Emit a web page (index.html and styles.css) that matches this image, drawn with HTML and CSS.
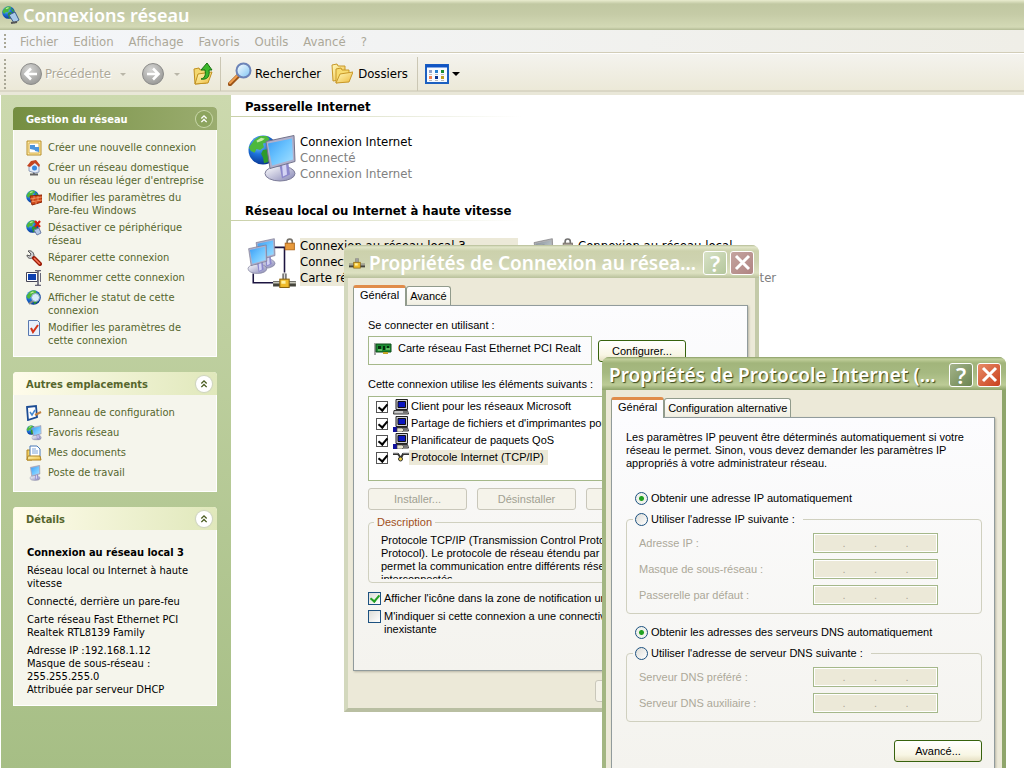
FILE: index.html
```
<!DOCTYPE html>
<html lang="fr">
<head>
    <meta charset="utf-8">
    <title>Connexions réseau</title>
    <link rel="stylesheet" href="styles.css">
</head>
<body>
<svg class="defs" width="0" height="0" aria-hidden="true">
    <defs>
        <radialGradient id="sea" cx="0.35" cy="0.3" r="0.75">
            <stop offset="0" stop-color="#8fd0ff"/>
            <stop offset="0.45" stop-color="#1e74dc"/>
            <stop offset="1" stop-color="#06308c"/>
        </radialGradient>
        <linearGradient id="screen" x1="0" y1="0" x2="1" y2="1">
            <stop offset="0" stop-color="#3a9cf4"/>
            <stop offset="0.5" stop-color="#6cc4ff"/>
            <stop offset="1" stop-color="#a4e0ff"/>
        </linearGradient>
        <linearGradient id="stand" x1="0" y1="0" x2="1" y2="1">
            <stop offset="0" stop-color="#ffffff"/>
            <stop offset="1" stop-color="#8484b4"/>
        </linearGradient>
        <linearGradient id="paper" x1="0" y1="0" x2="1" y2="1">
            <stop offset="0" stop-color="#fffbc0"/>
            <stop offset="1" stop-color="#eeb93a"/>
        </linearGradient>
        <radialGradient id="grey" cx="0.4" cy="0.3" r="0.8">
            <stop offset="0" stop-color="#d6d6d4"/>
            <stop offset="1" stop-color="#939391"/>
        </radialGradient>
        <linearGradient id="lens" x1="0" y1="0" x2="1" y2="1">
            <stop offset="0" stop-color="#ffffff"/>
            <stop offset="1" stop-color="#7cc4f4"/>
        </linearGradient>

        <symbol id="globe" viewBox="0 0 32 32">
            <circle cx="16" cy="16" r="15.5" fill="url(#sea)"/>
            <path d="M7 5l6-4 7 0 3 3-3 4-4 1 1 4-4 3-4-1-2 4-4-2-2-4z" fill="#4cb83c"/>
            <path d="M16 16l6-1 5 4-2 5-4 5-4 1-1-6-2-4z" fill="#2e9a2c"/>
            <path d="M24 6l4 4 2 5-4-1-3-4z" fill="#3aa834"/>
            <path d="M9 6l5-3 4 1-3 2-5 2z" fill="#c4eca4"/>
        </symbol>
        <symbol id="monitor" viewBox="0 0 32 48">
            <ellipse cx="16" cy="39" rx="15" ry="7.5" fill="url(#stand)" stroke="#7c7c98"/>
            <path d="M15 28l9-2 2 14-8 4z" fill="#8c88cc"/>
            <path d="M18 30l4-1 1 11-4 2z" fill="#d4d4f4"/>
            <path d="M2 7L30 1l1 26L6 34z" fill="#b0b0cc" stroke="#74748c"/>
            <path d="M4 9l24-5 1 21L8 31z" fill="url(#screen)"/>
        </symbol>
        <symbol id="lock" viewBox="0 0 10 12">
            <path d="M2.5 6V3.5a2.5 2.5 0 0 1 5 0V6" fill="none" stroke="#77736b" stroke-width="1.6"/>
            <rect x="0.5" y="5" width="9" height="6.5" fill="#e89a3c" stroke="#b06a20"/>
        </symbol>
        <symbol id="plug" viewBox="0 0 22 15">
            <path d="M11 1v7" stroke="#555" stroke-width="4"/>
            <path d="M11 1v7" stroke="#ddd" stroke-width="1.5"/>
            <path d="M0 11h22" stroke="#45453c" stroke-width="5"/>
            <path d="M0 10h22" stroke="#c8c8bc" stroke-width="1.5"/>
            <rect x="6.500" y="6.500" width="9" height="8" fill="#f0bc2c" stroke="#8a6410"/>
            <path d="M8 8h4v3H8z" fill="#fff2a0"/>
        </symbol>
        <symbol id="netmonitor" viewBox="0 0 48 50">
            <use href="#globe" x="0" y="1" width="30" height="30"/>
            <use href="#monitor" x="16" y="0" width="32" height="49"/>
        </symbol>
        <symbol id="lan" viewBox="0 0 48 48">
            <path d="M26 9h10v24M6 34v9h20" fill="none" stroke="#1c1440" stroke-width="1.500"/>
            <use href="#monitor" x="7" y="0" width="21" height="30"/>
            <use href="#monitor" x="0" y="6" width="20" height="29"/>
            <use href="#lock" x="36" y="0" width="10" height="12"/>
            <use href="#plug" x="25" y="33" width="22" height="15"/>
        </symbol>
        <symbol id="chevrons" viewBox="0 0 18 18">
            <path d="M6 8.500l3-3 3 3M6 12.500l3-3 3 3" fill="none" stroke="currentColor" stroke-width="1.500"/>
        </symbol>
        <symbol id="pc" viewBox="0 0 16 16">
            <path d="M3 .5h11.500v10H3z" fill="#cfcfd6" stroke="#222"/>
            <path d="M5 2.500h7.500v6H5z" fill="#0a16c0" stroke="#111"/>
            <path d="M1 11.500h13.500l1 3.500H.5z" fill="#c4c4c4" stroke="#333"/>
            <path d="M10 13h4" stroke="#222"/>
        </symbol>
        <symbol id="service" viewBox="0 0 16 16">
            <use href="#pc" width="16" height="16"/>
            <path d="M0 11h4v5H0z" fill="#10109c"/>
            <path d="M4 12l5 0 2 2-2 2H4z" fill="#e6e2cc" stroke="#333" stroke-width=".6"/>
        </symbol>
    </defs>
</svg>

<header class="titlebar">
    <svg class="icon" viewBox="0 0 18 18"><use href="#globe" width="13" height="13"/><path d="M7 9l6-3 4 8-5 3z" fill="#a8c8e8" stroke="#3c5c88"/><path d="M9 17l6-1" stroke="#555" stroke-width="2"/></svg>
    <h1>Connexions réseau</h1>
</header>

<nav class="menubar">
    <span class="grip"></span>
    <a href="#">Fichier</a>
    <a href="#">Edition</a>
    <a href="#">Affichage</a>
    <a href="#">Favoris</a>
    <a href="#">Outils</a>
    <a href="#">Avancé</a>
    <a href="#">?</a>
</nav>

<div class="toolbar">
    <span class="grip"></span>
    <button type="button" class="tool back" disabled>
        <svg width="24" height="24" viewBox="0 0 24 24"><circle cx="12" cy="12" r="10.500" fill="url(#grey)" stroke="#8c8c8a"/><path d="M18 12H7M12 6.500L6.500 12l5.500 5.500" fill="none" stroke="#fff" stroke-width="2.600"/></svg>
        Précédente
    </button>
    <span class="caret off"></span>
    <button type="button" class="tool next" aria-label="Suivante" disabled>
        <svg width="24" height="24" viewBox="0 0 24 24"><circle cx="12" cy="12" r="10.500" fill="url(#grey)" stroke="#8c8c8a"/><path d="M6 12h11M12 6.500l5.500 5.500-5.500 5.500" fill="none" stroke="#fff" stroke-width="2.600"/></svg>
    </button>
    <span class="caret off"></span>
    <button type="button" class="tool up" aria-label="Dossier parent">
        <svg width="20" height="24" viewBox="0 0 20 24"><path d="M1 7l5-1 1 2 6-1v14l-11 1z" fill="#f4d870" stroke="#c09020"/><path d="M2 22l3-10 14-2-4 11z" fill="url(#paper)" stroke="#c09020"/><path d="M8 17c4-1 5-4 4-9H8l6-7 5 7h-3c1 7-2 10-8 9z" fill="#3cb82c" stroke="#187010"/></svg>
    </button>
    <span class="rule"></span>
    <button type="button" class="tool">
        <svg width="24" height="24" viewBox="0 0 24 24"><path d="M2 22l8-8" stroke="#9c5418" stroke-width="4.500" stroke-linecap="round"/><path d="M2 21l7-7" stroke="#f0a050" stroke-width="2" stroke-linecap="round"/><circle cx="15.500" cy="8.500" r="7" fill="url(#lens)" stroke="#6c84b8" stroke-width="2"/></svg>
        Rechercher
    </button>
    <button type="button" class="tool folders">
        <svg width="22" height="22" viewBox="0 0 22 22"><path d="M1 2l5-1 1 2 7 0v13l-12 2z" fill="url(#paper)" stroke="#c89828"/><path d="M5 20V6l5-1 1 2h7v10z" fill="#f8dc70" stroke="#c89828"/><path d="M5 20l4-9 13-2-4 10z" fill="url(#paper)" stroke="#c89828"/></svg>
        Dossiers
    </button>
    <span class="rule"></span>
    <button type="button" class="tool view" aria-label="Affichages">
        <svg width="24" height="20" viewBox="0 0 24 20"><rect x="1" y="1" width="22" height="18" fill="#f8fbff" stroke="#1c60c0" stroke-width="2"/><path d="M1 2h22" stroke="#1054c4" stroke-width="3"/><path d="M4 6h3v3H4z" fill="#90a0c8"/><path d="M10 6h3v3h-3z" fill="#2880d0"/><path d="M16 6h3v3h-3z" fill="#1c8c30"/><path d="M4 12h3v3H4z" fill="#f08050"/><path d="M10 12h3v3h-3z" fill="#0c3490"/><path d="M16 12h3v3h-3z" fill="#c0a020"/><path d="M4 10.500h3m3 0h3m3 0h3M4 16.500h3m3 0h3m3 0h3" stroke="#bbb"/></svg>
        <span class="caret"></span>
    </button>
</div>

<div class="window">
    <aside class="sidebar">
        <section class="panel main">
            <h2>Gestion du réseau <button type="button" class="fold" aria-label="Réduire"><svg width="18" height="18"><use href="#chevrons"/></svg></button></h2>
            <ul>
                <li><svg viewBox="0 0 16 16"><path d="M1 1h14v14H1z" fill="#ffe9a0" stroke="#b8902c"/><path d="M3 3h10v10H3z" fill="#fff" stroke="#d4b050"/><path d="M4 5l5 0v5l-5-1zM8 7l5 0v5l-4-1z" fill="#4c94dc"/></svg><a href="#">Créer une nouvelle connexion</a></li>
                <li><svg viewBox="0 0 16 16"><path d="M4 14.500h8M8 11v4" stroke="#666" stroke-width="2"/><path d="M3 6l5-4 5 4v6l-4 1-6-2z" fill="#e4ecf8" stroke="#7c8cac" stroke-width=".8"/><path d="M1 6l4-5 5-1 4 5-1 2-4-4-5 4z" fill="#c44420"/><circle cx="8.500" cy="8" r="2.500" fill="#3888e0"/></svg><a href="#">Créer un réseau domestique ou un réseau léger d'entreprise</a></li>
                <li><svg viewBox="0 0 16 16"><use href="#globe" width="13" height="13"/><path d="M4 6l12-1v7L6 15z" fill="#d04818" stroke="#8c2408"/><path d="M4 9l12-2M5 12l11-2M8 6v3m4-3v2M7 9v3m5-4v3M10 12v2" stroke="#f8a878" stroke-width=".7"/></svg><a href="#">Modifier les paramètres du Pare-feu Windows</a></li>
                <li><svg viewBox="0 0 16 16"><use href="#globe" y="0" width="13" height="13"/><path d="M8 10l5-2 2 5-4 2z" fill="#b4c8e8" stroke="#6c7ca4"/><path d="M9 1l5 6M14 1L9 7" stroke="#d02010" stroke-width="2.200"/></svg><a href="#">Désactiver ce périphérique réseau</a></li>
                <li><svg viewBox="0 0 16 16"><path d="M6 6l3 3" stroke="#666" stroke-width="3"/><path d="M2 1l3 3-1 2-3-1c0 3 3 4 5 3l2-2C8 3 6 0 2 1z" fill="#d0d0d4" stroke="#555"/><path d="M8 8l6 6" stroke="#9c1c08" stroke-width="4" stroke-linecap="round"/><path d="M8 8l6 6" stroke="#f87858" stroke-width="1.500"/></svg><a href="#">Réparer cette connexion</a></li>
                <li><svg viewBox="0 0 16 16"><path d="M.5 2.500h11v9H.5z" fill="#fff" stroke="#445"/><path d="M2 4h8v6H2z" fill="#0c40b0"/><path d="M9 .5h2l1 1 1-1h2M9 15.500h2l1-1 1 1h2M12 1v13" fill="none" stroke="#667" stroke-width="1.600"/><path d="M14.500 3v9" stroke="#667"/></svg><a href="#">Renommer cette connexion</a></li>
                <li><svg viewBox="0 0 16 16"><use href="#globe" width="15" height="15"/><path d="M8 10l-5 4" stroke="#888" stroke-width="2"/><circle cx="9.500" cy="7.500" r="4" fill="#d8ecfc" stroke="#8ca4c4"/></svg><a href="#">Afficher le statut de cette connexion</a></li>
                <li><svg viewBox="0 0 16 16"><path d="M2.500.5h9l2 2v13h-11z" fill="#e8f0fc" stroke="#5878b0"/><path d="M5 8l2 4 5-7" fill="none" stroke="#d43418" stroke-width="2"/></svg><a href="#">Modifier les paramètres de cette connexion</a></li>
            </ul>
        </section>

        <section class="panel">
            <h2>Autres emplacements <button type="button" class="fold" aria-label="Réduire"><svg width="18" height="18"><use href="#chevrons"/></svg></button></h2>
            <ul>
                <li><svg viewBox="0 0 16 16"><path d="M1 2l9-1 1 11-9 3z" fill="#fff" stroke="#1c4c94" stroke-width="1.800"/><path d="M4 7l2 3 3-5" fill="none" stroke="#4488d0" stroke-width="1.500"/><path d="M9 10l6-3" stroke="#c08040" stroke-width="2"/></svg><a href="#">Panneau de configuration</a></li>
                <li><svg viewBox="0 0 16 16"><use href="#netmonitor" width="16" height="16"/></svg><a href="#">Favoris réseau</a></li>
                <li><svg viewBox="0 0 16 16"><path d="M1 5h4l1 2v8H1z" fill="#f4d060" stroke="#b08420"/><path d="M4 1h7l3 3v10H4z" fill="#fff" stroke="#4878b8"/><path d="M6 4h4M6 6h6M6 8h6" stroke="#7ca4d8"/><path d="M1 15l1-4h12l1 4z" fill="url(#paper)" stroke="#b08420"/></svg><a href="#">Mes documents</a></li>
                <li><svg viewBox="0 0 16 16"><use href="#monitor" x="3" width="12" height="16"/></svg><a href="#">Poste de travail</a></li>
            </ul>
        </section>

        <section class="panel">
            <h2>Détails <button type="button" class="fold" aria-label="Réduire"><svg width="18" height="18"><use href="#chevrons"/></svg></button></h2>
            <div class="details">
                <h3>Connexion au réseau local 3</h3>
                <p>Réseau local ou Internet à haute vitesse</p>
                <p>Connecté, derrière un pare-feu</p>
                <p>Carte réseau Fast Ethernet PCI Realtek RTL8139 Family</p>
                <p>Adresse IP :192.168.1.12<br>Masque de sous-réseau : 255.255.255.0<br>Attribuée par serveur DHCP</p>
            </div>
        </section>
    </aside>

    <main class="connections">
        <section>
            <h2>Passerelle Internet</h2>
            <div class="items">
                <article class="item">
                    <svg width="50" height="50"><use href="#netmonitor"/></svg>
                    <p><b>Connexion Internet</b>Connecté<br>Connexion Internet</p>
                </article>
            </div>
        </section>
        <section>
            <h2>Réseau local ou Internet à haute vitesse</h2>
            <div class="items">
                <article class="item selected">
                    <svg width="50" height="50"><use href="#lan"/></svg>
                    <p><b>Connexion au réseau local 3</b>Connecté, derrière un pare-feu<br>Carte réseau Fast Ethernet PCI...</p>
                </article>
                <article class="item off">
                    <svg width="50" height="50"><use href="#lan"/></svg>
                    <p><b>Connexion au réseau local</b>Désactivé<br>Carte réseau Wireless G2 Adapter</p>
                </article>
            </div>
        </section>
    </main>
</div>

<section class="dialog connection">
    <header>
        <svg width="18" height="18" viewBox="0 0 18 18"><use href="#plug" x="1" y="3" width="16" height="12"/></svg>
        <h2>Propriétés de Connexion au résea...</h2>
        <button type="button" class="help" aria-label="Aide">?</button>
        <button type="button" class="close" aria-label="Fermer"><svg width="17" height="17" viewBox="0 0 17 17"><path d="M2 2l13 13M15 2L2 15" stroke="#fff" stroke-width="3"/></svg></button>
    </header>
    <div class="tabs">
        <button type="button" class="tab current">Général</button>
        <button type="button" class="tab">Avancé</button>
    </div>
    <div class="page">
        <p>Se connecter en utilisant :</p>
        <div class="adapter">
            <div class="device">
                <svg width="18" height="14" viewBox="0 0 18 14"><path d="M1 1v12" stroke="#555"/><path d="M2 2h15v8H2z" fill="#1c8c34" stroke="#0c4c18"/><path d="M4 4h3v3H4zM9 4h2v4H9zM13 4h2v2h-2z" fill="#082c10"/><path d="M4 8h4m4-1h4" stroke="#9ce48c"/><path d="M9 10h5v2H9z" fill="#c4a428"/></svg>
                Carte réseau Fast Ethernet PCI Realt
            </div>
            <button type="button" class="btn">Configurer...</button>
        </div>
        <p>Cette connexion utilise les éléments suivants :</p>
        <ul class="components">
            <li><label><input type="checkbox" checked><svg><use href="#pc"/></svg><span>Client pour les réseaux Microsoft</span></label></li>
            <li><label><input type="checkbox" checked><svg><use href="#service"/></svg><span>Partage de fichiers et d'imprimantes pour</span></label></li>
            <li><label><input type="checkbox" checked><svg><use href="#service"/></svg><span>Planificateur de paquets QoS</span></label></li>
            <li class="selected"><label><input type="checkbox" checked><svg viewBox="0 0 16 16"><path d="M0 4h5l3 4 2-4h6" fill="none" stroke="#333" stroke-width="2"/><path d="M0 3h5m5 0h6" stroke="#bbb"/><circle cx="7.500" cy="9" r="2" fill="#f0d040" stroke="#333"/></svg><span>Protocole Internet (TCP/IP)</span></label></li>
        </ul>
        <div class="buttons">
            <button type="button" class="btn" disabled>Installer...</button>
            <button type="button" class="btn" disabled>Désinstaller</button>
            <button type="button" class="btn" disabled>Propriétés</button>
        </div>
        <fieldset class="description">
            <legend>Description</legend>
            <p>Protocole TCP/IP (Transmission Control Protocol/Internet<br>Protocol). Le protocole de réseau étendu par défaut qui<br>permet la communication entre différents réseaux<br>interconnectés.</p>
        </fieldset>
        <label class="option"><input type="checkbox" checked>Afficher l'icône dans la zone de notification une fois connecté</label>
        <label class="option"><input type="checkbox"><span>M'indiquer si cette connexion a une connectivité limitée ou inexistante</span></label>
    </div>
    <footer>
        <button type="button" class="btn" disabled>OK</button>
    </footer>
</section>

<section class="dialog protocol">
    <header>
        <h2>Propriétés de Protocole Internet (...</h2>
        <button type="button" class="help" aria-label="Aide">?</button>
        <button type="button" class="close" aria-label="Fermer"><svg width="17" height="17" viewBox="0 0 17 17"><path d="M2 2l13 13M15 2L2 15" stroke="#fff" stroke-width="3"/></svg></button>
    </header>
    <div class="tabs">
        <button type="button" class="tab current">Général</button>
        <button type="button" class="tab">Configuration alternative</button>
    </div>
    <div class="page">
        <p>Les paramètres IP peuvent être déterminés automatiquement si votre<br>réseau le permet. Sinon, vous devez demander les paramètres IP<br>appropriés à votre administrateur réseau.</p>
        <label class="auto"><input type="radio" name="ip" checked>Obtenir une adresse IP automatiquement</label>
        <fieldset>
            <legend><label><input type="radio" name="ip">Utiliser l'adresse IP suivante :</label></legend>
            <div class="row">
                <label for="adresse">Adresse IP :</label>
                <div class="ip"><input id="adresse" disabled>.<input aria-label="Adresse IP 2" disabled>.<input aria-label="Adresse IP 3" disabled>.<input aria-label="Adresse IP 4" disabled></div>
            </div>
            <div class="row">
                <label for="masque">Masque de sous-réseau :</label>
                <div class="ip"><input id="masque" disabled>.<input aria-label="Masque 2" disabled>.<input aria-label="Masque 3" disabled>.<input aria-label="Masque 4" disabled></div>
            </div>
            <div class="row">
                <label for="passerelle">Passerelle par défaut :</label>
                <div class="ip"><input id="passerelle" disabled>.<input aria-label="Passerelle 2" disabled>.<input aria-label="Passerelle 3" disabled>.<input aria-label="Passerelle 4" disabled></div>
            </div>
        </fieldset>
        <label class="auto"><input type="radio" name="dns" checked>Obtenir les adresses des serveurs DNS automatiquement</label>
        <fieldset>
            <legend><label><input type="radio" name="dns">Utiliser l'adresse de serveur DNS suivante :</label></legend>
            <div class="row">
                <label for="dns1">Serveur DNS préféré :</label>
                <div class="ip"><input id="dns1" disabled>.<input aria-label="DNS préféré 2" disabled>.<input aria-label="DNS préféré 3" disabled>.<input aria-label="DNS préféré 4" disabled></div>
            </div>
            <div class="row">
                <label for="dns2">Serveur DNS auxiliaire :</label>
                <div class="ip"><input id="dns2" disabled>.<input aria-label="DNS auxiliaire 2" disabled>.<input aria-label="DNS auxiliaire 3" disabled>.<input aria-label="DNS auxiliaire 4" disabled></div>
            </div>
        </fieldset>
        <button type="button" class="btn">Avancé...</button>
    </div>
</section>
</body>
</html>
```
FILE: styles.css
```
* {
    box-sizing: border-box;
}
html, body {
    height: 100%;
}
body {
    position: relative;
    display: flex;
    flex-direction: column;
    margin: 0;
    overflow: hidden;
    background: #fff;
    color: #000;
    font: 13px/16px "DejaVu Sans Condensed", "DejaVu Sans", sans-serif;
}
h1, h2, h3, p, ul, fieldset {
    margin: 0;
    padding: 0;
}
ul {
    list-style: none;
}
a {
    color: inherit;
    text-decoration: none;
}
button, input {
    margin: 0;
    font: inherit;
    color: inherit;
}
svg {
    flex: none;
}
.defs {
    position: absolute;
}

/* title, menu and tool bars */
.titlebar {
    display: flex;
    align-items: center;
    gap: 3px;
    height: 30px;
    padding-left: 2px;
    background: linear-gradient(#e9eccf, #c1c8a2 4px, #c5cba6 14px, #d3d9b5 27px, #b3bb95);
}
.titlebar .icon {
    width: 18px;
    height: 18px;
}
.titlebar h1 {
    color: #fff;
    font: 600 18px/26px "Noto Sans", sans-serif;
}
.menubar {
    display: flex;
    align-items: center;
    gap: 15px;
    height: 23px;
    padding: 1px 0 0 4px;
    background: linear-gradient(90deg, #f4f6fa, #efeee7);
    border-bottom: 1px solid #d2cdb8;
    color: #aca899;
}
.grip {
    width: 2px;
    height: 16px;
    background: repeating-linear-gradient(#a9a796 0 2px, transparent 2px 4px);
}
.menubar .grip {
    margin-right: -1px;
}
.toolbar {
    display: flex;
    align-items: center;
    height: 42px;
    padding: 2px 4px 3px;
    background: linear-gradient(#f4f3ee, #ece9d8 36px, #c9c5b2 37px, #e9e7d8 38px);
    border-top: 1px solid #fff;
}
.toolbar .grip {
    height: 30px;
    margin-right: 13px;
}
.tool {
    display: flex;
    align-items: center;
    gap: 3px;
    padding: 0;
    background: none;
    border: 0;
}
.tool:disabled {
    color: #aca899;
    text-shadow: 1px 1px #fff;
}
.back {
    gap: 2px;
    margin-right: 9px;
}
.next {
    margin: 0 9px 0 15px;
}
.up {
    margin: 0 7px 0 13px;
}
.rule {
    width: 1px;
    height: 34px;
    margin-right: 7px;
    background: #cbc7b4;
}
.folders {
    gap: 5px;
    margin: 0 9px 0 10px;
}
.caret {
    border: 4px solid transparent;
    border-top-color: #000;
    border-bottom: 0;
}
.caret.off {
    border-width: 3px;
    border-bottom: 0;
    border-top-color: #b9b6a8;
}

/* explorer window */
.window {
    display: flex;
    flex: 1;
    min-height: 0;
}
.sidebar {
    display: flex;
    flex-direction: column;
    gap: 15px;
    width: 231px;
    padding: 12px 14px 0 12px;
    border-left: 1px solid #fff;
    background: linear-gradient(#ccd9ae, #a6be85);
    font-size: 11px;
    line-height: 13px;
}
.panel {
    background: #f5f5ec;
    border: solid #fff;
    border-width: 0 1px 1px;
    border-radius: 4px 4px 0 0;
    color: #56662d;
}
.panel h2 {
    display: flex;
    align-items: center;
    justify-content: space-between;
    height: 23px;
    margin: 0 -1px;
    padding: 2px 5px 0 13px;
    border-radius: 4px 4px 0 0;
    background: linear-gradient(90deg, #fffceb, #e0e8bb);
    font-size: 11px;
}
.panel.main h2 {
    background: linear-gradient(90deg, #758e41, #9bad70);
    color: #fff;
}
.fold {
    width: 16px;
    height: 16px;
    margin-bottom: 2px;
    padding: 0;
    background: #fff;
    border: 0;
    border-radius: 50%;
    box-shadow: 0 0 1px 1px #cdd2c0;
    color: #4a5c20;
}
.fold svg {
    display: block;
    width: 16px;
    height: 16px;
}
.main .fold {
    background: #8da45f;
    box-shadow: 0 0 0 1px #c8d6a8;
    color: #fff;
}
.panel ul {
    display: flex;
    flex-direction: column;
    gap: 3px;
    padding: 10px 12px 9px;
}
.panel li {
    display: flex;
    gap: 6px;
    min-height: 17px;
}
.panel li svg {
    width: 16px;
    height: 16px;
}
.panel li a {
    padding-top: 1px;
}
.details {
    display: flex;
    flex-direction: column;
    gap: 5px;
    padding: 16px 12px 9px 13px;
    color: #000;
}
.details h3 {
    font-size: 11px;
}
.connections {
    flex: 1;
    min-width: 0;
}
.connections h2 {
    padding: 4px 14px 2px;
    border-bottom: 1px solid;
    border-image: linear-gradient(90deg, #c9d0a8, #fff 290px) 1;
    font-size: 13px;
    line-height: 15px;
}
.items {
    display: flex;
    gap: 7px;
    padding: 17px 16px 15px;
}
.item {
    display: flex;
    gap: 3px;
    width: 271px;
    height: 50px;
    color: #808080;
    white-space: nowrap;
}
.item p {
    align-self: flex-start;
}
.item b {
    display: block;
    color: #000;
    font-weight: normal;
}
.item.selected p {
    flex: 1;
    background: #ece9d8;
    color: #000;
}
.item.off svg {
    filter: grayscale(0.9);
}

/* property dialogs */
.dialog {
    position: absolute;
    display: flex;
    flex-direction: column;
    padding: 0 7px 0 5px;
    background: #ece9d8;
    border: 4px solid;
    border-color: #c9cfae #c4caa9 #b9bfa2 #d3d8bd;
    border-width: 0 4px 4px;
    border-radius: 8px 8px 0 0;
    font: 11px/13px "Liberation Sans", Arial, sans-serif;
}
.dialog header {
    display: flex;
    align-items: center;
    gap: 4px;
    height: 33px;
    margin: 0 -11px 0 -9px;
    padding: 2px 5px 0 4px;
    border-radius: 7px 7px 0 0;
    background: linear-gradient(#b5bc95, #e2e6c9 2px, #ccd1ac 6px, #ced3b0 16px, #dde1c1 28px, #b9c19b);
}
.dialog header h2 {
    flex: 1;
    color: #fff;
    font: 600 19px/28px "Noto Sans", sans-serif;
    white-space: nowrap;
}
.connection header {
    gap: 3px;
}
.help, .close {
    display: flex;
    align-items: center;
    justify-content: center;
    width: 24px;
    height: 24px;
    padding: 0;
    border: 1px solid #fff;
    border-radius: 3px;
    background: linear-gradient(135deg, #d8e2c6, #b4c69c);
    color: #fff;
    font: 600 22px/22px "Noto Sans", sans-serif;
}
.close {
    background: linear-gradient(135deg, #c4a4a0, #b08482);
}
.tabs {
    display: flex;
    align-items: flex-end;
    margin-top: 7px;
}
.tab {
    height: 19px;
    padding: 0 3px;
    border: 1px solid #919b8c;
    border-bottom: 0;
    border-radius: 3px 3px 0 0;
    background: linear-gradient(#fff, #f1efe2);
}
.tab.current {
    position: relative;
    z-index: 1;
    height: 21px;
    margin-bottom: -1px;
    padding: 0 6px 3px;
    border-top: 3px solid #e08c4a;
    background: #fcfcfe;
}
.page {
    padding: 13px 12px 0 14px;
    border: 1px solid #919b9c;
    box-shadow: 1px 1px 2px #b8b5a4;
    background: linear-gradient(#fcfcfe, #f4f3ee);
}
.btn {
    width: 88px;
    height: 22px;
    padding: 0;
    border: 1px solid #37620d;
    border-radius: 3px;
    background: linear-gradient(#fff, #f8f6e4 70%, #e6dfc2);
}
.btn:disabled {
    background: #f5f3ea;
    border-color: #c9c7ba;
    color: #a1a192;
}
fieldset {
    min-width: 0;
    border: 1px solid #d0d0bf;
    border-radius: 4px;
}
input[type="checkbox"], input[type="radio"] {
    flex: none;
    appearance: none;
    width: 13px;
    height: 13px;
    border: 1px solid #1c5180;
    background: linear-gradient(135deg, #dcdcd7, #fff);
}
input[type="radio"] {
    border-radius: 50%;
}
input[type="radio"]:checked {
    background: radial-gradient(#21a121 0 2px, #f0f2ec 3px);
}
input[type="checkbox"]:checked::before {
    content: "";
    display: block;
    width: 4px;
    height: 7px;
    margin: 0 0 0 3px;
    border: solid #21a121;
    border-width: 0 2px 2px 0;
    transform: rotate(40deg);
}

.connection {
    top: 245px;
    left: 344px;
    width: 415px;
}
.connection .page {
    padding-bottom: 29px;
}
.adapter {
    display: flex;
    align-items: flex-end;
    gap: 6px;
    margin: 4px 0 13px;
}
.adapter .btn {
    margin-bottom: 3px;
}
.device {
    display: flex;
    gap: 6px;
    width: 224px;
    height: 29px;
    padding: 5px;
    border: 1px solid #a5b88a;
    white-space: nowrap;
}
.components {
    height: 85px;
    margin: 5px 0 7px;
    border: 1px solid #a5b88a;
    background: #fff;
}
.components label {
    display: flex;
    align-items: center;
    height: 17px;
    padding-left: 7px;
}
.components li:first-child {
    padding-top: 1px;
}
.components svg {
    width: 16px;
    height: 16px;
    margin-left: 5px;
}
.components span {
    padding: 1px 4px 1px 2px;
}
.components .selected span {
    background: #ece9d8;
}
.components input[type="checkbox"] {
    width: 12px;
    height: 12px;
    background: #fff;
    border-color: #555;
}
.components input[type="checkbox"]:checked::before {
    border-color: #000;
}
.buttons {
    display: flex;
    gap: 10px;
    margin-bottom: 6px;
}
.buttons .btn {
    width: 99px;
}
.description {
    height: 67px;
    margin-bottom: 9px;
    padding-left: 12px;
}
.description legend {
    margin-left: -7px;
    padding: 0 3px;
    color: #a0501c;
}
.description p {
    height: 45px;
    margin-top: 5px;
    overflow: hidden;
    white-space: nowrap;
}
.option {
    display: flex;
    gap: 3px;
    margin-bottom: 5px;
}
.option span {
    max-width: 310px;
}
.connection footer {
    padding: 9px 0 6px 242px;
}

.protocol {
    top: 357px;
    bottom: 0;
    left: 602px;
    width: 404px;
    border-color: #8fa56b #8fa56b #7c9558 #a3b682;
    border-bottom: 0;
}
.protocol header {
    padding-left: 7px;
    background: linear-gradient(#8a9d66, #c2d09c 2px, #a2b57b 6px, #a6b981 16px, #bccb96 28px, #8fa46b);
}
.protocol header h2 {
    text-shadow: 1px 1px 1px #3c4a1c;
}
.protocol .help {
    background: linear-gradient(135deg, #a4b48a, #6c8450);
}
.protocol .close {
    background: linear-gradient(135deg, #e88c68, #c8401c);
}
.protocol .page {
    display: flex;
    flex-direction: column;
    flex: 1;
    border-bottom: 0;
}
.protocol .auto, .protocol legend label {
    display: flex;
    align-items: center;
    gap: 3px;
}
.protocol .auto {
    margin: 12px 0 8px 9px;
}
.protocol p + .auto {
    margin-top: 22px;
}
.protocol fieldset {
    padding: 7px 43px 8px 12px;
}
.protocol legend {
    margin-left: -6px;
    padding-right: 8px;
}
.row {
    display: flex;
    align-items: center;
    justify-content: space-between;
    color: #aca899;
}
.row + .row {
    margin-top: 6px;
}
.ip {
    display: flex;
    align-items: center;
    width: 125px;
    height: 20px;
    border: 1px solid #a5b88a;
    box-shadow: inset 0 0 0 1px #fff;
    background: #ece9d8;
}
.ip input {
    flex: 1;
    width: 0;
    height: 14px;
    padding: 0;
    border: 0;
    background: none;
}
.protocol .page > .btn {
    align-self: flex-end;
    margin-top: 18px;
}
```
